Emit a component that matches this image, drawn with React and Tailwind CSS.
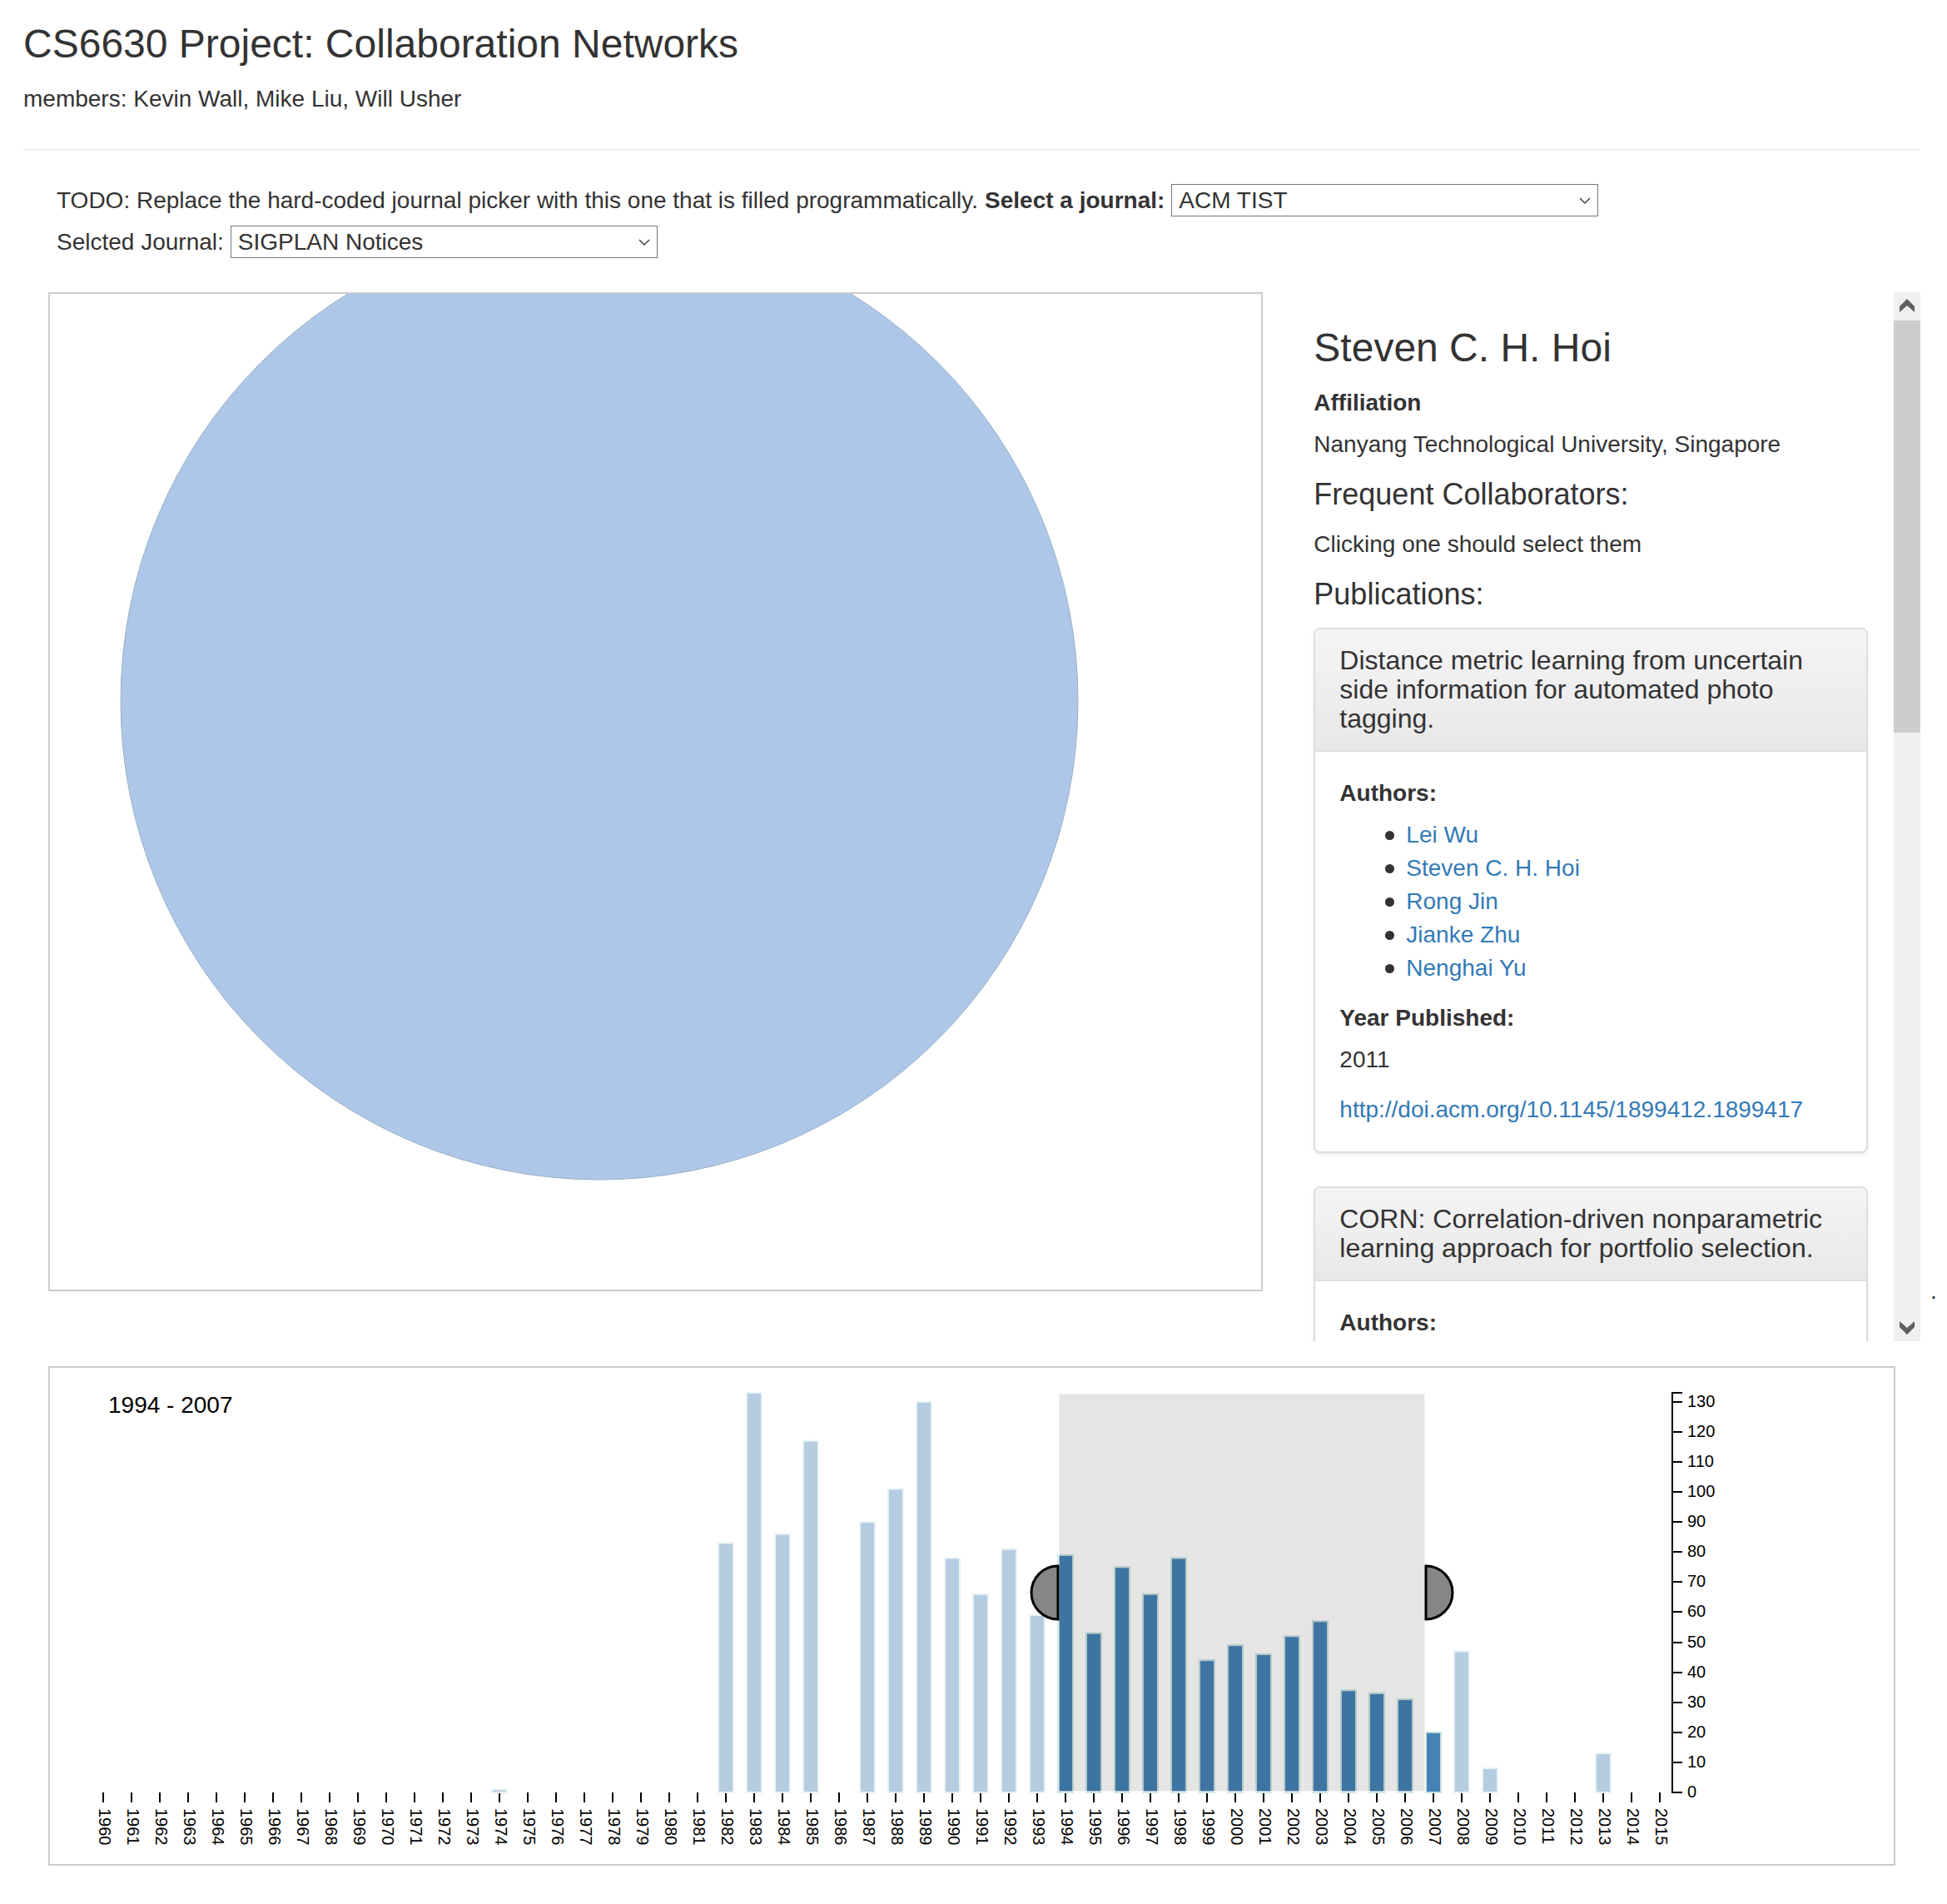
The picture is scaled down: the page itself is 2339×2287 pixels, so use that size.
import React from "react";

const counts = {
  1974: 1, 1982: 83, 1983: 133, 1984: 86, 1985: 117, 1987: 90, 1988: 101,
  1989: 130, 1990: 78, 1991: 66, 1992: 81, 1993: 59, 1994: 79, 1995: 53,
  1996: 75, 1997: 66, 1998: 78, 1999: 44, 2000: 49, 2001: 46, 2002: 52,
  2003: 57, 2004: 34, 2005: 33, 2006: 31, 2007: 20, 2008: 47, 2009: 8, 2013: 13,
};
const years = Array.from({ length: 56 }, (_, i) => 1960 + i);
const levels = Array.from({ length: 14 }, (_, i) => i * 10);
const selection = { from: 1994, to: 2007 };

const BASE = 510;
const x = (year) => 64 + (year - 1960) * 34;
const y = (value) => BASE - (value * 480) / 133;

const publications = [
  {
    title: "Distance metric learning from uncertain side information for automated photo tagging.",
    authors: ["Lei Wu", "Steven C. H. Hoi", "Rong Jin", "Jianke Zhu", "Nenghai Yu"],
    year: "2011",
    link: "http://doi.acm.org/10.1145/1899412.1899417",
  },
  {
    title: "CORN: Correlation-driven nonparametric learning approach for portfolio selection.",
    authors: [],
  },
];

function JournalSelect({ id, value }) {
  return (
    <span className="relative inline-flex">
      <select
        id={id}
        defaultValue={value}
        className="h-[39px] w-[513px] appearance-none border border-[#777] bg-white pr-8 pl-2 text-[28px] leading-9 text-[#333]"
      >
        <option>{value}</option>
      </select>
      <svg
        className="pointer-events-none absolute top-4 right-[9px] h-2 w-[14px]"
        viewBox="0 0 14 8"
        fill="none"
        stroke="#444"
        strokeWidth="1.5"
      >
        <path d="M1 1l6 6 6-6" />
      </svg>
    </span>
  );
}

function Publication({ title, authors, year, link }) {
  return (
    <article className="mb-10 rounded-lg border-2 border-[#ddd] bg-white shadow-[0_2px_4px_rgba(0,0,0,0.075)]">
      <div className="rounded-t-md border-b-2 border-[#ddd] bg-linear-to-b from-[#f5f5f5] to-[#e8e8e8] px-[29px] py-5">
        <h3 className="text-[32px] leading-[35px]">{title}</h3>
      </div>
      <div className="px-[29px] py-[30px]">
        <p className="mb-[10px] font-bold">Authors:</p>
        <ul className="mb-5 pl-20">
          {authors.map((name) => (
            <li
              key={name}
              className="flex items-center before:mr-[14px] before:-ml-[25px] before:size-[11px] before:rounded-full before:bg-[#333]"
            >
              <a href="#author" className="text-[#337ab7]">{name}</a>
            </li>
          ))}
        </ul>
        {year && (
          <>
            <p className="mb-[10px] font-bold">Year Published:</p>
            <p className="mb-5">{year}</p>
          </>
        )}
        {link && <a href={link} className="block text-[#337ab7]">{link}</a>}
      </div>
    </article>
  );
}

function Scrollbar() {
  return (
    <div className="flex w-8 shrink-0 flex-col bg-[#f0f0f0]">
      <button type="button" aria-label="Scroll up" className="flex h-[34px] justify-center pt-2">
        <svg className="h-4 w-[18px]" viewBox="0 0 18 16" fill="#606060">
          <path d="M9 0l9 9v7L9 8l-9 8V9z" />
        </svg>
      </button>
      <div className="h-[495px] bg-[#cdcdcd]" />
      <button type="button" aria-label="Scroll down" className="mt-auto flex h-[34px] items-end justify-center pb-2">
        <svg className="h-4 w-[18px]" viewBox="0 0 18 16" fill="#606060">
          <path d="M9 16l9-9V0L9 8 0 0v7z" />
        </svg>
      </button>
    </div>
  );
}

function Timeline() {
  return (
    <svg className="block h-[596px] w-full text-[20px]" fill="black">
      {years.map((year) => (
        <g key={year}>
          <rect x={x(year) - 1} y={BASE} width="2" height="12" />
          <text transform={`translate(${x(year) - 5} 529) rotate(90)`}>{year}</text>
        </g>
      ))}
      {Object.entries(counts).map(([key, value]) => {
        const year = Number(key);
        const active = year >= selection.from && year <= selection.to;
        return (
          <rect
            key={year}
            x={x(year) - 9}
            y={y(value)}
            width="18"
            height={BASE - y(value)}
            fill={active ? "#4682b4" : "#b5cce1"}
            stroke={active ? "#c9e0e1" : "#e9f3f5"}
            strokeWidth="2"
          />
        );
      })}
      <rect x="1212" y="31" width="440" height="478" fillOpacity="0.1" stroke="white" strokeOpacity="0.55" strokeWidth="2" />
      <g fill="#868686" stroke="black" strokeWidth="3">
        <path d="M1211 238a32 32 0 0 0 0 64z" />
        <path d="M1653 238a32 32 0 0 1 0 64z" />
      </g>
      <path d="M1961 30H1949V510H1961" fill="none" stroke="black" strokeWidth="2" />
      {levels.map((level) => (
        <g key={level}>
          <rect x="1949" y={Math.round(y(level)) - 1} width="12" height="2" />
          <text x="1967" y={Math.round(y(level)) + 6}>{level}</text>
        </g>
      ))}
      <text x="70" y="54" className="text-[28px]">
        {selection.from} - {selection.to}
      </text>
    </svg>
  );
}

export default function App() {
  return (
    <div className="bg-white pt-[26px] pb-[46px] font-['Liberation_Sans',Arial,sans-serif] text-[28px] leading-10 text-[#333]">
      <header className="mr-8 ml-7 border-b-2 border-[#eee] pb-10">
        <h1 className="mb-5 text-[48px] leading-[53px]">CS6630 Project: Collaboration Networks</h1>
        <p>members: Kevin Wall, Mike Liu, Will Usher</p>
      </header>

      <div className="mt-10 mb-10 flex flex-col gap-[10px] pl-[68px]">
        <div className="flex h-10 gap-2">
          <span>TODO: Replace the hard-coded journal picker with this one that is filled programmatically.</span>
          <label htmlFor="journal" className="font-bold">Select a journal:</label>
          <JournalSelect id="journal" value="ACM TIST" />
        </div>
        <div className="flex h-10 gap-2">
          <label htmlFor="selected-journal">Selcted Journal:</label>
          <JournalSelect id="selected-journal" value="SIGPLAN Notices" />
        </div>
      </div>

      <div className="flex pl-7">
        <main className="flex h-[1260px] flex-1">
          <div className="w-2/3 px-[30px]">
            <div className="h-[1200px] border-2 border-[#ccc]">
              <svg className="block h-full w-full">
                <circle cx="660" cy="489" r="575" fill="#aec7e8" stroke="#9ab0c6" />
              </svg>
            </div>
          </div>
          <aside className="flex w-1/3 overflow-hidden">
            <div className="h-full flex-1 overflow-hidden px-[31px] pt-10">
              <h2 className="mb-5 text-[48px] leading-[53px]">Steven C. H. Hoi</h2>
              <p className="mb-[10px] font-bold">Affiliation</p>
              <p className="mb-5">Nanyang Technological University, Singapore</p>
              <h3 className="mb-5 text-[36px]">Frequent Collaborators:</h3>
              <p className="mb-5">Clicking one should select them</p>
              <h3 className="mb-5 text-[36px]">Publications:</h3>
              {publications.map((item) => (
                <Publication key={item.title} {...item} />
              ))}
            </div>
            <Scrollbar />
          </aside>
        </main>
        <span className="mb-10 w-8 self-end pl-3">.</span>
      </div>

      <section className="mt-[30px] mr-[62px] ml-[58px] border-2 border-[#ccc]">
        <Timeline />
      </section>
    </div>
  );
}
